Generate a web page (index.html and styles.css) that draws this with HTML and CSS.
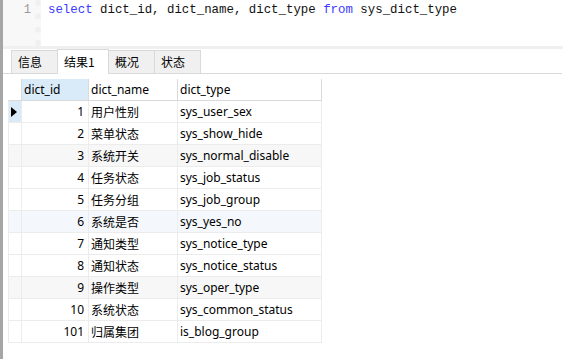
FILE: index.html
```html
<!DOCTYPE html>
<html lang="zh-CN">
<head>
    <meta charset="UTF-8">
    <title>sys_dict_type</title>
    <link rel="stylesheet" href="styles.css">
</head>
<body>
    <div class="edge"></div>
    <div class="main">
        <div class="editor">
            <div class="gutter">1</div>
            <div class="code"><span class="kw">select</span> dict_id, dict_name, dict_type <span class="kw">from</span> sys_dict_type</div>
        </div>
        <div class="band"></div>
        <div class="tabs">
            <div class="tab">信息</div>
            <div class="tab active">结果1</div>
            <div class="tab">概况</div>
            <div class="tab">状态</div>
        </div>
        <table class="grid">
            <thead>
                <tr>
                    <th class="ind"></th>
                    <th class="col-id current">dict_id</th>
                    <th class="col-name">dict_name</th>
                    <th class="col-type">dict_type</th>
                </tr>
            </thead>
            <tbody>
                <tr class="sel"><td class="ind"><span class="arrow"></span></td><td class="num">1</td><td>用户性别</td><td>sys_user_sex</td></tr>
                <tr><td class="ind"></td><td class="num">2</td><td>菜单状态</td><td>sys_show_hide</td></tr>
                <tr class="shade"><td class="ind"></td><td class="num">3</td><td>系统开关</td><td>sys_normal_disable</td></tr>
                <tr><td class="ind"></td><td class="num">4</td><td>任务状态</td><td>sys_job_status</td></tr>
                <tr><td class="ind"></td><td class="num">5</td><td>任务分组</td><td>sys_job_group</td></tr>
                <tr class="hover"><td class="ind"></td><td class="num">6</td><td>系统是否</td><td>sys_yes_no</td></tr>
                <tr><td class="ind"></td><td class="num">7</td><td>通知类型</td><td>sys_notice_type</td></tr>
                <tr><td class="ind"></td><td class="num">8</td><td>通知状态</td><td>sys_notice_status</td></tr>
                <tr class="shade"><td class="ind"></td><td class="num">9</td><td>操作类型</td><td>sys_oper_type</td></tr>
                <tr><td class="ind"></td><td class="num">10</td><td>系统状态</td><td>sys_common_status</td></tr>
                <tr><td class="ind"></td><td class="num">101</td><td>归属集团</td><td>is_blog_group</td></tr>
            </tbody>
        </table>
    </div>
</body>
</html>
```

FILE: styles.css
```css
body {
    margin: 0;
    height: 359px;
    display: flex;
    background: #fff;
    overflow: hidden;
}
.edge {
    width: 3px;
    background: #a6a6a6;
}
.main {
    flex: 1;
}
.editor {
    height: 46px;
    display: flex;
}
.gutter {
    width: 28px;
    padding-right: 4px;
    text-align: right;
    background: #f8f8f8;
    border-right: 6px dotted #f0f0f0;
    font-family: "Liberation Mono", monospace;
    font-size: 12px;
    line-height: 20px;
    color: #999;
}
.code {
    padding-left: 7px;
    font-family: "Liberation Mono", monospace;
    font-size: 12.4px;
    line-height: 20px;
    color: #111;
    white-space: pre;
}
.kw {
    color: #3a3aff;
}
.band {
    height: 3px;
    background: #f0f0f0;
}
.tabs {
    display: flex;
    align-items: flex-end;
    height: 24px;
    padding-left: 8px;
    border-bottom: 1px solid #d9d9d9;
    margin-right: 1px;
}
.tab {
    box-sizing: border-box;
    width: 47px;
    height: 23px;
    line-height: 22px;
    padding-left: 6px;
    font-family: "Noto Sans CJK SC", sans-serif;
    font-size: 12px;
    color: #000;
    background: #f0f0f0;
    border: 1px solid #d9d9d9;
    border-bottom: none;
    margin-right: -1px;
}
.tab.active {
    background: #fff;
    width: 52px;
    height: 25px;
    line-height: 24px;
    margin-bottom: -1px;
    position: relative;
}
.grid {
    margin: 5px 0 0 5px;
    border-collapse: collapse;
    table-layout: fixed;
    font-family: "Noto Sans", "Noto Sans CJK SC", sans-serif;
    font-size: 12px;
    color: #000;
}
.grid th, .grid td {
    height: 21px;
    padding: 0 2px;
    border: 1px solid #ececec;
    text-align: left;
    font-weight: normal;
    white-space: nowrap;
}
.grid th {
    border-color: #dadada;
    border-top: none;
}
.grid .ind {
    width: 8px;
    padding: 0 2px;
}
.grid .col-id { width: 62px; }
.grid .col-name { width: 84px; }
.grid .col-type { width: 139px; }
.grid th.current {
    background: #d9eaf8;
}
.grid th.ind {
    border-left-color: #fff;
}
.grid td.num {
    text-align: right;
    padding-right: 4px;
}
.grid tr.sel td.ind {
    background: #d9eaf8;
}
.arrow {
    display: block;
    width: 0;
    height: 0;
    border-top: 5px solid transparent;
    border-bottom: 5px solid transparent;
    border-left: 6px solid #000;
}
.grid tr.shade td {
    background: #f7f7f7;
}
.grid tr.hover td {
    background: #f4f8fc;
}
```
